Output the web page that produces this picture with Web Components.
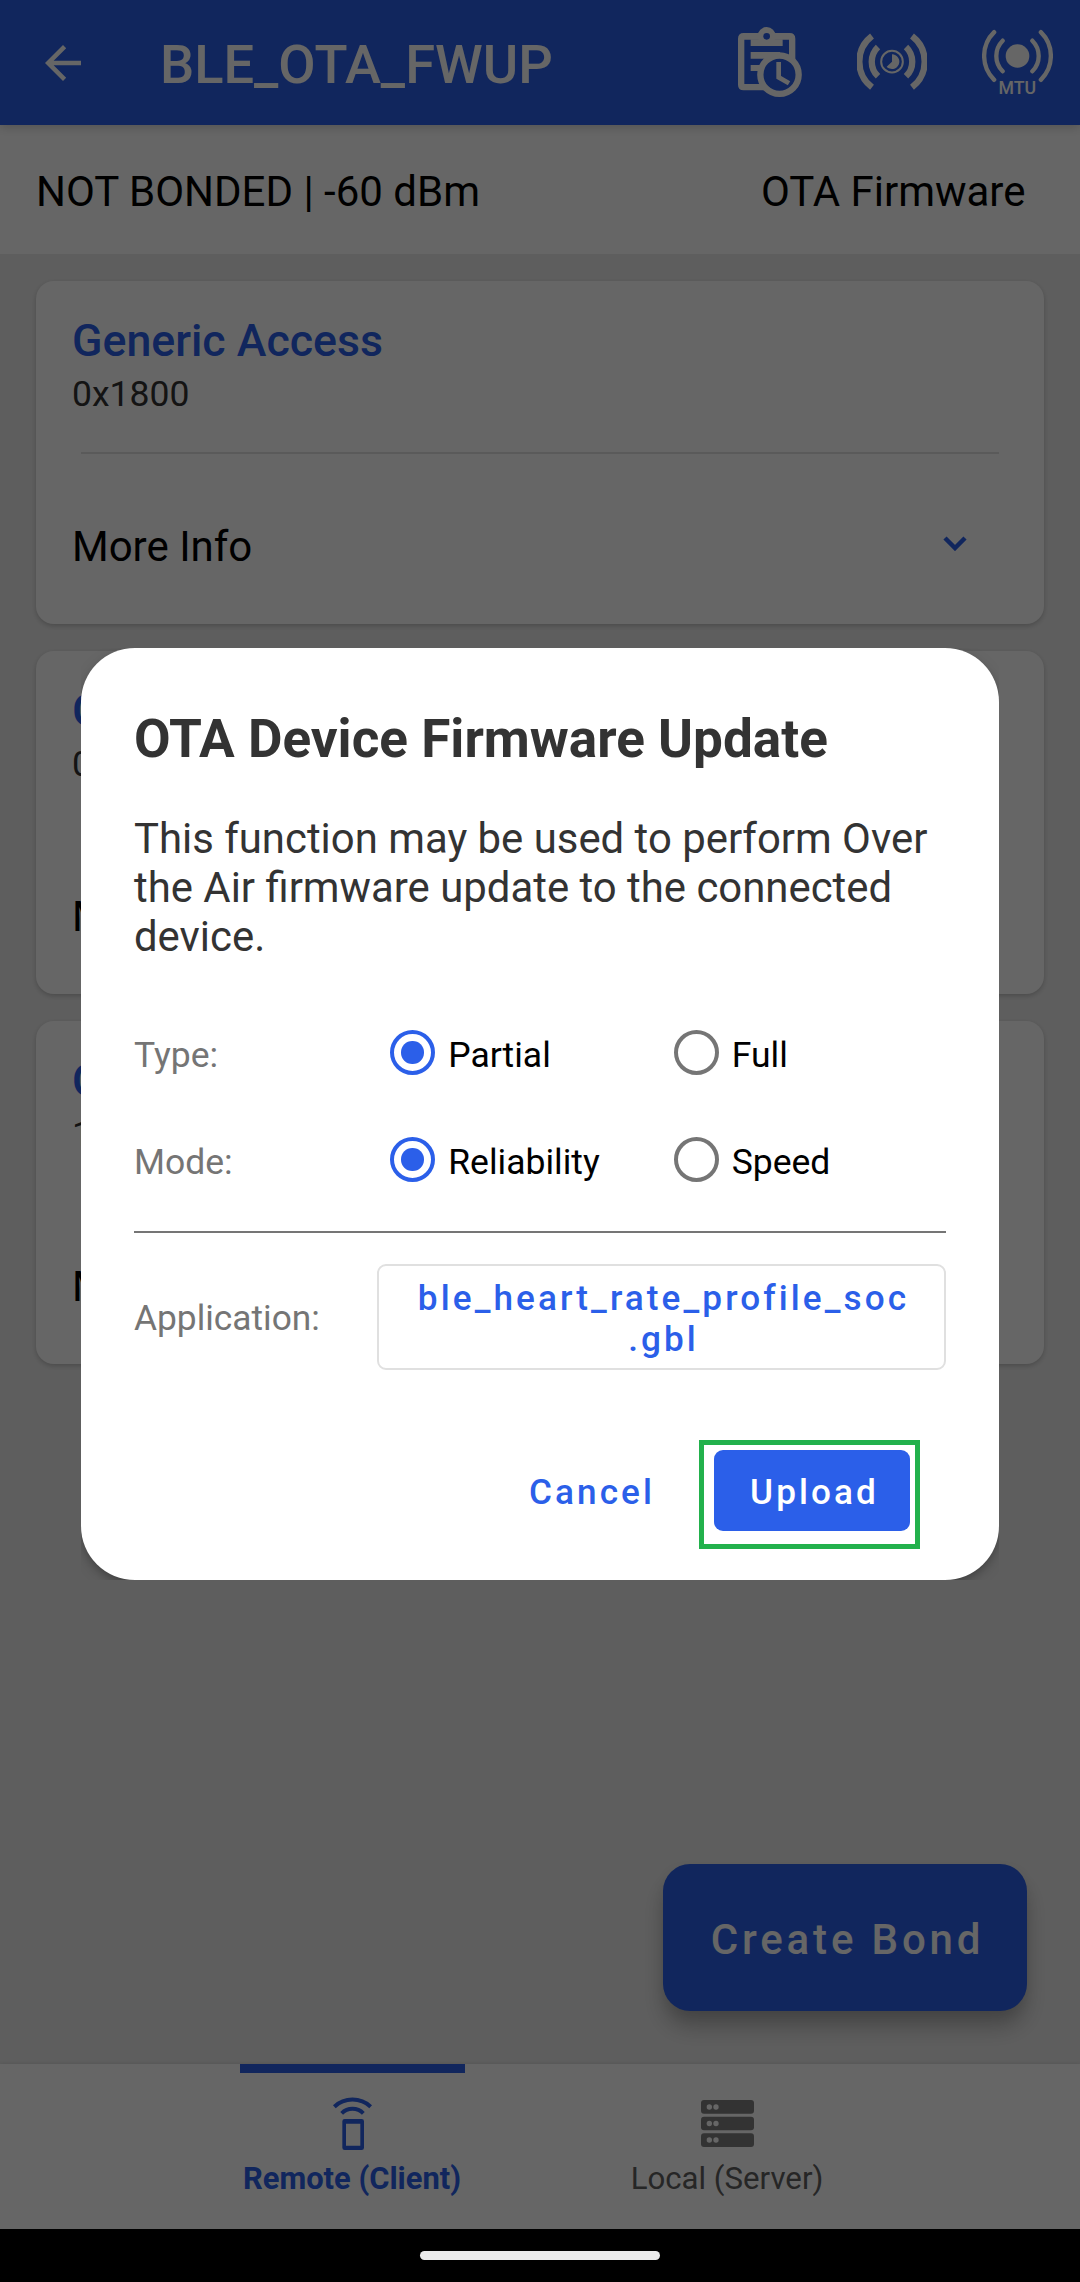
<!DOCTYPE html>
<html lang="en">
<head>
<meta charset="utf-8">
<title>BLE OTA</title>
<style>
  html, body { margin: 0; padding: 0; background: #000; }
  body { font-family: Roboto, "Liberation Sans", sans-serif; }
</style>
</head>
<body>
<ota-screen></ota-screen>

<script>
const define = (name, html) => {
  const template = document.createElement('template');
  template.innerHTML = html;
  customElements.define(name, class extends HTMLElement {
    connectedCallback() {
      if (this.shadowRoot) return;
      this.attachShadow({ mode: 'open' }).append(template.content.cloneNode(true));
    }
  });
};

define('app-bar', `
<style>
  :host { display: flex; align-items: center; height: 125px; box-sizing: border-box; padding: 0 27px 0 36px;
    background: var(--blue); color: #fff; box-shadow: 0 2px 10px rgba(0,0,0,.2); z-index: 1; flex: none; }
  svg { display: block; flex: none; fill: currentColor; }
  h1 { margin: 4px 0 0 70px; flex: 1; font-size: 54.200px; font-weight: 500; line-height: 64px; }
  .actions { display: flex; gap: 55px; margin-top: -1px; }
  .line { fill: none; stroke: currentColor; }
</style>
<svg width="54" height="54" viewBox="0 0 24 24"><path d="M20 11H7.83l5.59-5.59L12 4l-8 8 8 8 1.41-1.41L7.83 13H20v-2z"/></svg>
<h1><slot></slot></h1>
<div class="actions">
  <svg width="64" height="70" viewBox="114 81 192 210">
    <path fill-rule="evenodd" d="M131 99H269Q286 99 286 116V271H131Q114 271 114 254V116Q114 99 131 99ZM133 119V252H267V119Z"/>
    <path d="M152 118H248V138H152Z"/>
    <circle cx="200" cy="108" r="27"/>
    <circle cx="200" cy="109" r="10" fill="var(--blue)"/>
    <path d="M152 156H240V176H152ZM152 195H190V213H152Z"/>
    <path d="M240 225V290H300V215Z" fill="var(--blue)"/>
    <circle cx="238.500" cy="224" r="57.500" fill="var(--blue)" stroke="currentColor" stroke-width="19"/>
    <path class="line" d="M236 186V232L267 250" stroke-width="14"/>
  </svg>
  <svg width="70" height="70" viewBox="471 81 210 210">
    <g class="line" stroke-width="19">
      <path d="M516 108A97 97 0 0 0 516 262M636 108A97 97 0 0 1 636 262"/>
      <path d="M534 141A61 61 0 0 0 534 229M618 141A61 61 0 0 1 618 229"/>
      <circle cx="576" cy="185" r="32.500" stroke-width="6"/>
    </g>
    <path d="M576 163A22 22 0 1 1 560 200L576 185Z"/>
  </svg>
  <svg width="71" height="70" viewBox="845.500 81 213 210">
    <circle cx="952" cy="168" r="35.500"/>
    <g class="line" stroke-width="13" stroke-linecap="round">
      <path d="M882 96.500A100 100 0 0 0 882 239.500M1022 96.500A100 100 0 0 1 1022 239.500"/>
      <path d="M907.500 122A65 65 0 0 0 907.500 214M996.500 122A65 65 0 0 1 996.500 214"/>
    </g>
    <text x="895" y="282" font-size="53" font-weight="500">MTU</text>
  </svg>
</div>`);

define('status-strip', `
<style>
  :host { display: flex; justify-content: space-between; align-items: center; height: 129px; box-sizing: border-box;
    padding: 4px 54.500px 0 36px; background: #fff; color: #000; font-size: 42px; line-height: 50px; flex: none; }
</style>
<slot name="state"></slot><slot name="name"></slot>`);

define('service-card', `
<style>
  :host { display: block; height: 343px; box-sizing: border-box; padding: 30px 37px 0; background: #fff; border-radius: 18px;
    box-shadow: 0 2px 5px rgba(0,0,0,.2); }
  .name { font-size: 44.700px; font-weight: 500; line-height: 60px; color: var(--blue); }
  .uuid { font-size: 35.500px; line-height: 47px; color: #333; }
  .name, .uuid { margin-left: -1px; }
  hr { margin: 34px 8px 0; height: 2px; border: 0; background: #e0e0e0; }
  .more { display: flex; justify-content: space-between; align-items: center; height: 50px; margin-top: 67.500px;
    padding-right: 40px; font-size: 42px; line-height: 50px; color: #000; margin-left: -1px; }
  svg { margin-top: -8px; fill: none; stroke: var(--blue); stroke-width: 4.500; }
</style>
<div class="name"><slot name="name"></slot></div>
<div class="uuid"><slot name="uuid"></slot></div>
<hr>
<div class="more"><span><slot name="more">More Info</slot></span><svg width="24" height="16" viewBox="0 0 24 16"><path d="M2 3L12 13L22 3"/></svg></div>`);

define('fab-button', `
<style>
  :host { position: absolute; right: 53px; bottom: 218px; width: 364px; height: 147px; box-sizing: border-box; display: flex;
    align-items: center; justify-content: center; padding: 3px 0 0 5px; border-radius: 27px; background: var(--blue); color: #fff;
    font-size: 42px; font-weight: 500; letter-spacing: 3.850px; box-shadow: 0 17px 22px -2px rgba(0,0,0,.26), 0 4px 14px rgba(0,0,0,.06); }
</style>
<slot></slot>`);

define('nav-item', `
<style>
  :host { display: flex; flex-direction: column; align-items: center; width: 375px; color: #606060; --icon: #808080;
    font-size: 31.200px; line-height: 37px; }
  :host([selected]) { color: var(--blue); --icon: var(--blue); font-weight: 700; font-size: 30.900px; }
  i { width: 225px; height: 9px; margin-bottom: 24px; }
  :host([selected]) i { background: var(--blue); }
  span { margin: 10px 1px 0 0; }
</style>
<i></i><slot name="icon"></slot><span><slot></slot></span>`);

define('bottom-bar', `
<style>
  :host { display: flex; justify-content: center; height: 165px; background: #fff; flex: none;
    box-shadow: 0 0 4px rgba(0,0,0,.12); z-index: 1; }
</style>
<slot></slot>`);

define('radio-option', `
<style>
  :host { display: flex; align-items: center; gap: 13.200px; color: #000; }
  b { box-sizing: border-box; width: 45px; height: 45px; border: 4.500px solid #757575; border-radius: 50%;
    display: flex; align-items: center; justify-content: center; }
  :host([checked]) b { border-color: var(--blue); }
  :host([checked]) b::after { content: ""; width: 22.500px; height: 22.500px; border-radius: 50%; background: var(--blue); }
  span { margin-top: 4px; }
</style>
<b></b><span><slot></slot></span>`);

define('push-button', `
<style>
  :host { display: flex; align-items: center; justify-content: center; box-sizing: border-box; position: relative;
    color: var(--blue); font-size: 35.150px; font-weight: 500; letter-spacing: 3.080px; line-height: 41px; padding-top: 3px; }
  :host([kind="filled"]) { width: 196px; height: 81px; border-radius: 9px; background: var(--blue); color: #fff; padding-left: 5px; }
  :host([kind="outlined"]) { flex: 1; height: 106px; border: 2px solid #e0e0e0; border-radius: 9px; text-align: center; padding-left: 4px; }
  .mark { display: none; position: absolute; left: -15px; top: -10px; right: -10px; bottom: -18px; border: 5px solid #22b14c; }
  :host([marked]) .mark { display: block; }
</style>
<span><slot></slot></span><div class="mark"></div>`);

define('ota-dialog', `
<style>
  :host { display: block; width: 918px; height: 932px; overflow: hidden; }
  section { box-sizing: border-box; height: 932px; padding: 60px 53px 0; background: #fff; border-radius: 54px; color: #333;
    box-shadow: 0 5px 14px -4px rgba(0,0,0,.5); }
  h2 { margin: 0; font-size: 53.100px; font-weight: 700; line-height: 62px; }
  p { margin: 44px 0 38px; font-size: 41.880px; line-height: 49px; }
  .row { display: grid; grid-template-columns: 256px 283.500px 1fr; align-items: center; height: 107px; font-size: 35.500px; line-height: 42px; }
  label { color: #757575; margin-top: 4px; }
  hr { margin: 18px 0 31px; height: 2px; border: 0; background: #757575; }
  .file { display: flex; align-items: center; font-size: 35.300px; line-height: 42px; }
  .file label { width: 243px; margin-top: 2px; }
  .actions { display: flex; justify-content: flex-end; gap: 59px; margin: 80px 36px 0 0; }
</style>
<section>
  <h2>OTA Device Firmware Update</h2>
  <p>This function may be used to perform Over<br>the Air firmware update to the connected<br>device.</p>
  <div class="row"><label>Type:</label><radio-option checked>Partial</radio-option><radio-option>Full</radio-option></div>
  <div class="row"><label>Mode:</label><radio-option checked>Reliability</radio-option><radio-option>Speed</radio-option></div>
  <hr>
  <div class="file"><label>Application:</label><push-button kind="outlined">ble_heart_rate_profile_soc<br>.gbl</push-button></div>
  <div class="actions"><push-button>Cancel</push-button><push-button kind="filled" marked>Upload</push-button></div>
</section>`);

define('home-bar', `
<style>
  :host { display: flex; align-items: center; justify-content: center; height: 53px; background: #000; }
  i { width: 240px; height: 9px; border-radius: 5px; background: #ebebeb; }
</style>
<i></i>`);

define('ota-screen', `
<style>
  :host { display: block; width: 1080px; height: 2282px; --blue: #2b5fe9; }
  .app { position: relative; display: flex; flex-direction: column; height: 2229px; background: #ebebeb; overflow: hidden; }
  .list { flex: 1; display: flex; flex-direction: column; gap: 27px; padding: 27px 36px 0; }
  .scrim { position: absolute; inset: 0; z-index: 2; display: flex; align-items: center; justify-content: center;
    box-sizing: border-box; padding: 0 0 1px; background: rgba(0,0,0,.6); }
  svg { display: block; }
</style>
<div class="app">
  <app-bar>BLE_OTA_FWUP</app-bar>
  <status-strip><span slot="state">NOT BONDED | -60 dBm</span><span slot="name">OTA Firmware</span></status-strip>
  <div class="list">
    <service-card><span slot="name">Generic Access</span><span slot="uuid">0x1800</span></service-card>
    <service-card><span slot="name">G</span><span slot="uuid">0</span><span slot="more">M</span></service-card>
    <service-card><span slot="name">O</span><span slot="uuid">1</span><span slot="more">M</span></service-card>
  </div>
  <bottom-bar>
    <nav-item selected>
      <svg slot="icon" width="53" height="53" viewBox="378 141 159 159" fill="none" stroke="var(--icon)" stroke-width="12">
        <path d="M403 170A80 80 0 0 1 512 170M425 190A46 46 0 0 1 490 190"/>
        <path fill="var(--icon)" stroke="none" fill-rule="evenodd" d="M434 207H485Q492 207 492 214V293Q492 300 485 300H434Q427 300 427 293V214Q427 207 434 207ZM438 221V287H481V221Z"/>
      </svg>Remote (Client)</nav-item>
    <nav-item>
      <svg slot="icon" width="53" height="53" viewBox="453 141 159 159" fill="var(--icon)">
        <rect x="453" y="150" width="159" height="41" rx="9"/><rect x="453" y="200" width="159" height="41" rx="9"/><rect x="453" y="250" width="159" height="41" rx="9"/>
        <g fill="#fff"><circle cx="478" cy="171" r="8"/><circle cx="498" cy="171" r="8"/><circle cx="478" cy="220.500" r="8"/><circle cx="498" cy="220.500" r="8"/><circle cx="478" cy="270" r="8"/><circle cx="498" cy="270" r="8"/></g>
      </svg>Local (Server)</nav-item>
  </bottom-bar>
  <fab-button>Create Bond</fab-button>
  <div class="scrim"><ota-dialog></ota-dialog></div>
</div>
<home-bar></home-bar>`);
</script>
</body>
</html>
